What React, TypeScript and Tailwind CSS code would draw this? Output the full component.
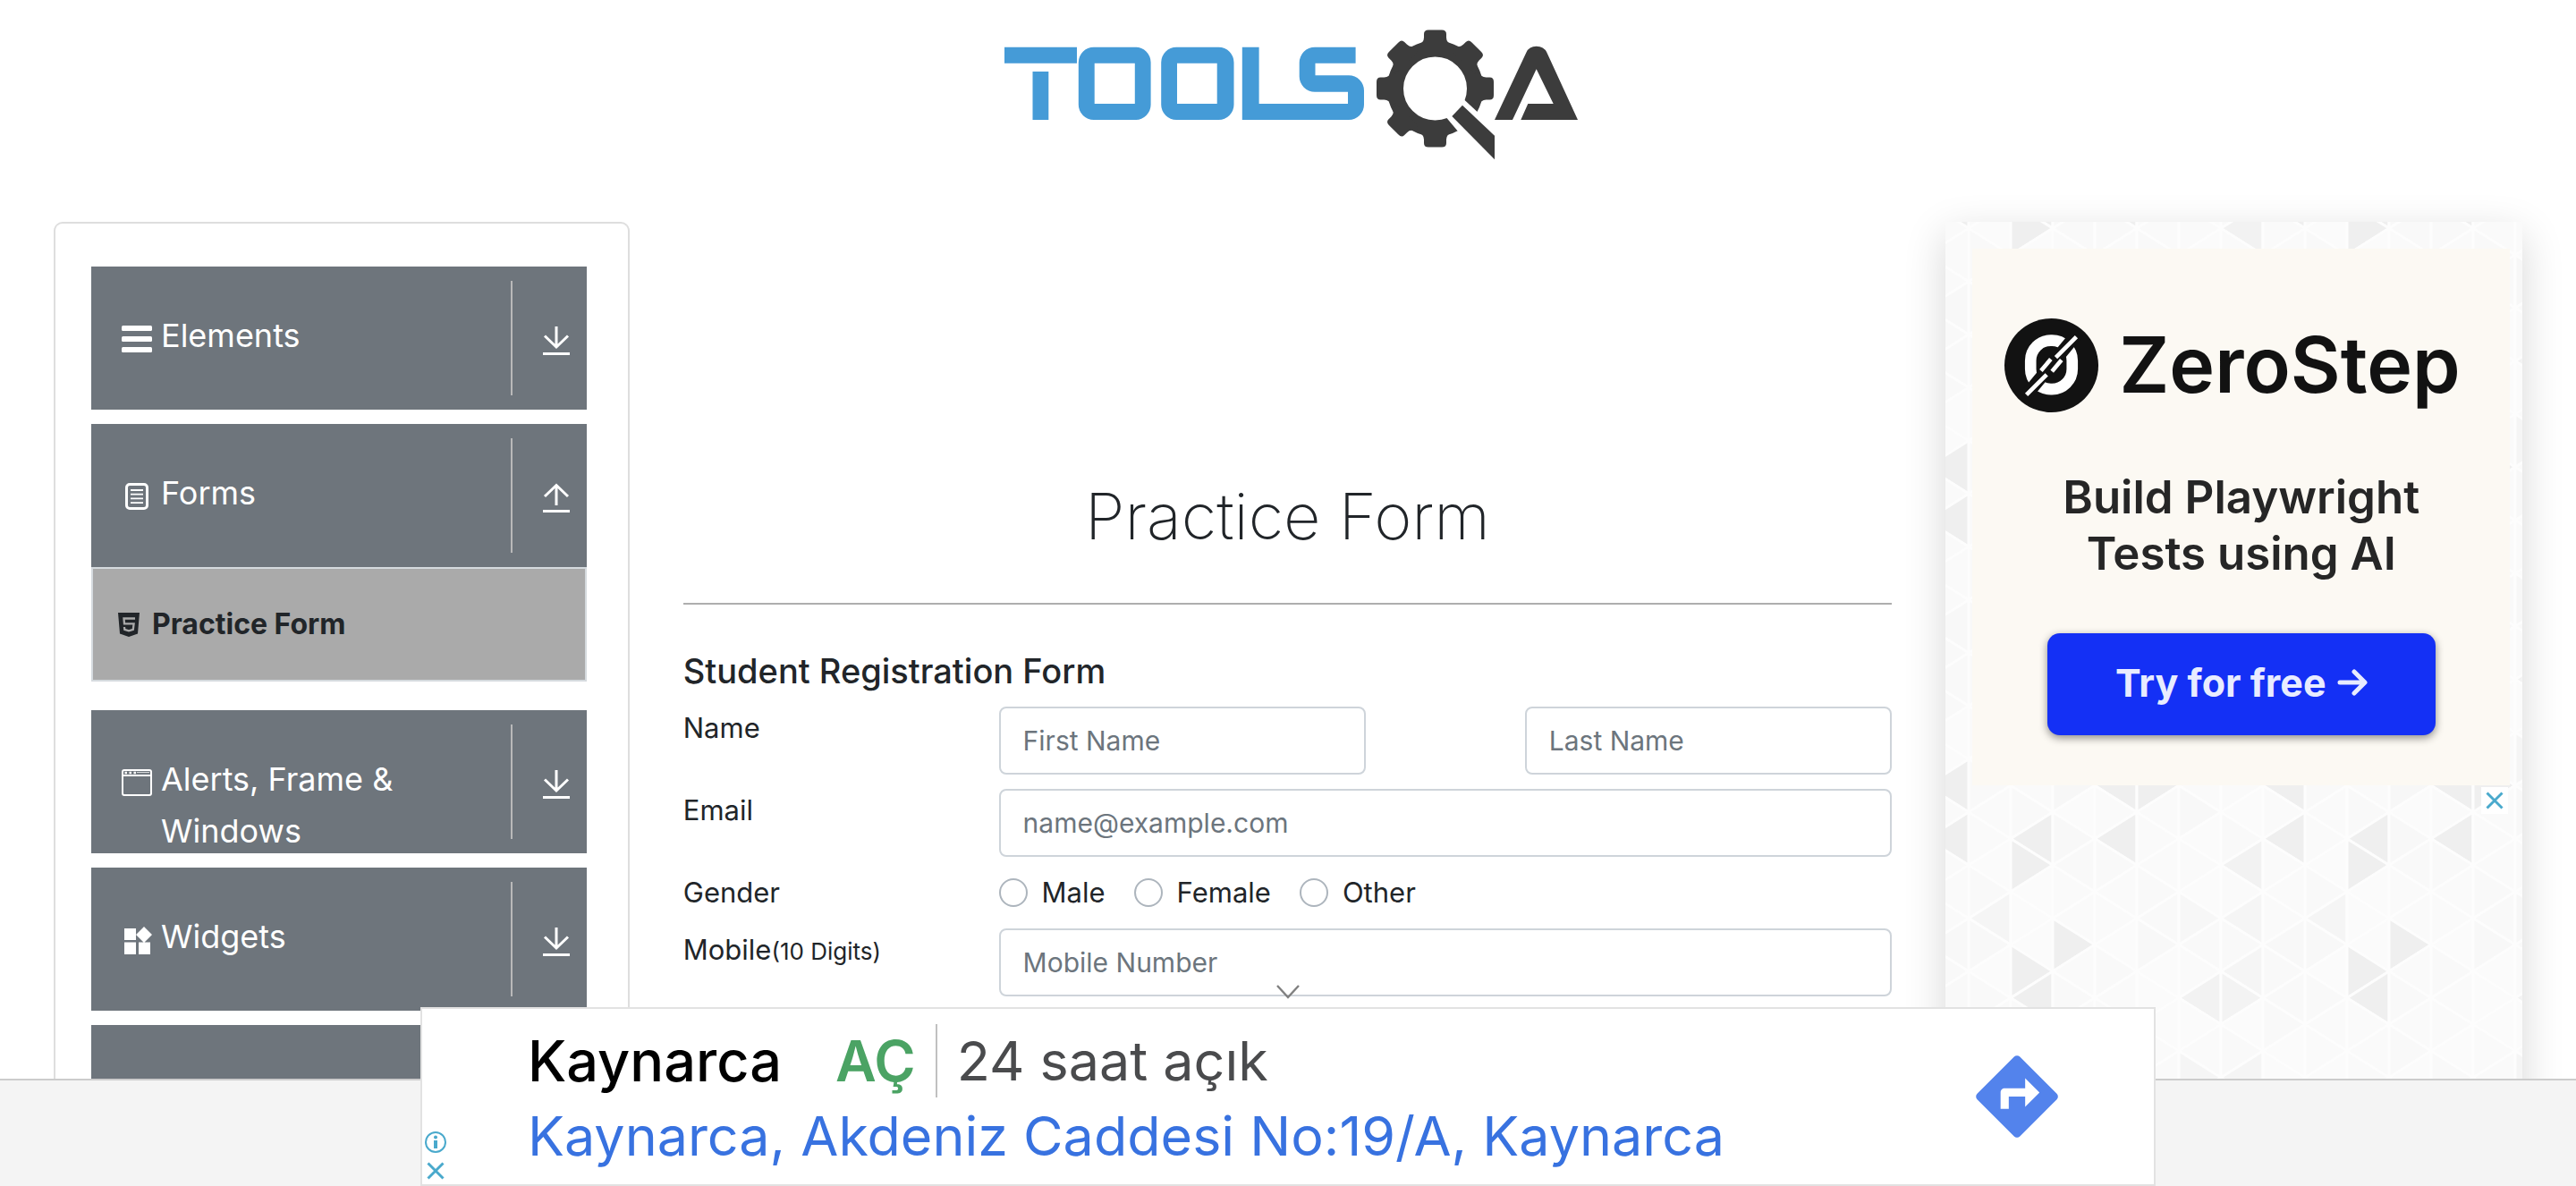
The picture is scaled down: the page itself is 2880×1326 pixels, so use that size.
import React from "react";

const UI = "font-['Inter','Liberation_Sans',sans-serif]";

const COL = 47;
const HALF = 356 / 12;
const DARK = "#efefef";
const MID = "#f5f5f5";
const SHADES: Record<string, string> = {
  "7,11": DARK, "7,1": DARK, "1,1": DARK, "1,2": DARK, "1,6": DARK, "1,7": DARK,
  "2,5": DARK, "3,1": DARK, "3,11": DARK, "4,11": DARK, "5,7": "#f2f2f2",
  "6,2": "#f2f2f2", "6,7": "#f3f3f3", "0,4": MID, "6,4": MID, "6,6": MID,
  "5,10": MID, "6,10": MID, "5,4": "#f7f7f7", "2,11": "#f7f7f7", "4,5": "#f8f8f8",
  "0,5": "#f8f8f8", "2,1": "#f8f8f8", "7,5": "#f8f8f8", "5,0": "#f8f8f8",
};
const LIGHTS = ["#fafafa", "#f9f9f9", "#fbfbfb", "#fafafa"];

function TrianglePattern() {
  const cells: React.ReactNode[] = [];
  for (let i = 0; i < 8; i++) {
    for (let h = 0; h <= 12; h++) {
      const left = (i + h) % 2 === 0;
      const x1 = i * COL;
      const x2 = x1 + COL;
      const y = h * HALF;
      const pts = left
        ? `${x1},${y} ${x2},${y - HALF} ${x2},${y + HALF}`
        : `${x2},${y} ${x1},${y - HALF} ${x1},${y + HALF}`;
      const hh = h % 12;
      const fill = SHADES[`${i},${hh}`] ?? LIGHTS[(i * 5 + hh * 3 + ((i * hh) % 3)) % 4];
      cells.push(<polygon key={`${i}-${h}`} points={pts} fill={fill} stroke="#fdfdfd" strokeWidth="3" />);
    }
  }
  return (
    <svg className="absolute inset-0 h-full w-full" aria-hidden="true">
      <defs>
        <pattern id="triangles" x="26" y="304" width="376" height="356" patternUnits="userSpaceOnUse">
          {cells}
        </pattern>
      </defs>
      <rect width="100%" height="100%" fill="url(#triangles)" />
    </svg>
  );
}

function Logo() {
  return (
    <svg viewBox="1120 20 650 170" className="h-[170px] w-[650px]" role="img" aria-label="TOOLSQA">
      <g fill="#459bd7" fillRule="evenodd">
        <path d="M1123 52.7H1204V70.7H1123ZM1154.5 80H1172.3V134H1154.5Z" />
        <path d="M1222.8 52.7H1269.6A17 17 0 0 1 1286.6 69.7V117A17 17 0 0 1 1269.6 134H1222.8A17 17 0 0 1 1205.8 117V69.7A17 17 0 0 1 1222.8 52.7ZM1223.7 70.7V116H1268.8V70.7Z" />
        <path d="M1315.2 52.7H1362.5A17 17 0 0 1 1379.5 69.7V117A17 17 0 0 1 1362.5 134H1315.2A17 17 0 0 1 1298.2 117V69.7A17 17 0 0 1 1315.2 52.7ZM1316 70.7V116H1360.7V70.7Z" />
        <path d="M1388.8 52.7H1407.6V116H1507V102.7H1470A17.3 17.3 0 0 1 1452.7 85.4V70A17.3 17.3 0 0 1 1470 52.7H1515.6V70.7H1470.5V84.3H1508A17 17 0 0 1 1525 101.3V117A17 17 0 0 1 1508 134H1388.8Z" />
      </g>
      <g fill="#3c3c3c">
        <circle cx="1604.5" cy="99" r="44.5" fill="none" stroke="#3c3c3c" strokeWidth="18" />
        {[0, 45, 90, 180, 225, 270, 315].map((a) => (
          <path
            key={a}
            transform={`rotate(${a} 1604.5 99)`}
            d="M1585 50Q1592 48 1592 42V38Q1592 33.5 1597 33.5H1612Q1617 33.5 1617 38V42Q1617 48 1624 50L1620 56H1589Z"
          />
        ))}
        <polygon fill="#fff" points="1637.3,111.7 1652.7,126 1673,145.3 1673,186.7 1629.3,146 1617.3,131.7" />
        <polygon points="1635,117.7 1671,151.7 1671,178.3 1623.3,130" />
        <path d="M1671 134L1706.5 58.5Q1709.5 51.7 1717.7 51.7Q1726 51.7 1729.3 58.5L1764 134H1700.3L1708.3 116H1736.7L1717.7 77.3L1691 134Z" />
      </g>
    </svg>
  );
}

function ListIcon() {
  return (
    <svg viewBox="0 0 34 34" className="h-[34px] w-[34px]" fill="currentColor">
      <rect y="2" width="34" height="6" rx="1.5" />
      <rect y="14" width="34" height="6" rx="1.5" />
      <rect y="26" width="34" height="6" rx="1.5" />
    </svg>
  );
}

function FormsIcon() {
  return (
    <svg viewBox="0 0 34 34" className="h-[34px] w-[34px]" fill="none" stroke="currentColor">
      <rect x="5.5" y="3.5" width="23" height="27" rx="3.5" strokeWidth="3" />
      <path d="M10 10H24M10 14.7H24M10 19.4H24M10 24.1H24" strokeWidth="1.8" />
    </svg>
  );
}

function WindowIcon() {
  return (
    <svg viewBox="0 0 34 34" className="h-[34px] w-[34px]" fill="none" stroke="currentColor" strokeWidth="2">
      <rect x="1" y="3" width="32" height="28" rx="2" />
      <path d="M1 9H33" />
      <path d="M3.5 6H6M8.5 6H11M13.5 6H16" strokeWidth="2.4" />
      <path d="M17 5.6H31" strokeWidth="0.8" />
    </svg>
  );
}

function WidgetsIcon() {
  return (
    <svg viewBox="0 0 34 34" className="h-[34px] w-[34px]" fill="currentColor">
      <path d="M3 4H16V17H3ZM3 19.5H16V33H3ZM19 19.5H32V33H19ZM25 2L34 11L25 20L16 11Z" />
    </svg>
  );
}

function ArrowIcon({ up = false }: { up?: boolean }) {
  return (
    <svg viewBox="0 0 32 34" className="h-[34px] w-8" fill="none" stroke="currentColor" strokeWidth="3">
      <path d={up ? "M16 25V3M3 15L16 2.5L29 15M1 31.5H31" : "M16 1V23M3 11.5L16 24L29 11.5M1 31.5H31"} />
    </svg>
  );
}

function Html5Icon() {
  return (
    <svg viewBox="0 0 24 27" className="h-[27px] w-6">
      <path fill="#212529" d="M0 0H24L22 23.5L12 27L2 23.5Z" />
      <path fill="none" stroke="#aaaaaa" strokeWidth="2.3" d="M19 6.5H6.5L7 12.3H17.6L16.8 18.8L12 20.4L7.3 18.8L7 16" />
    </svg>
  );
}

function CloseIcon() {
  return (
    <svg viewBox="0 0 20 20" className="h-5 w-5" fill="none" stroke="#49a9cc" strokeWidth="3">
      <path d="M1.5 1.5L18.5 18.5M18.5 1.5L1.5 18.5" />
    </svg>
  );
}

function ZeroStepMark() {
  return (
    <svg viewBox="28 30 320 322" className="h-[107px] w-[107px] shrink-0" fill="none">
      <circle cx="188" cy="191" r="158" fill="#121212" />
      <rect x="118" y="107" width="140" height="164" rx="68" stroke="#fff" strokeWidth="38" />
      <path d="M278 80L98 298" stroke="#121212" strokeWidth="42" />
      <path d="M272 95L203 164M104 290L172 222M153 209L186 170M190 211L222 173" stroke="#fff" strokeWidth="14" />
    </svg>
  );
}

function NavItem({ icon, label, up }: { icon?: React.ReactNode; label: string; up?: boolean }) {
  return (
    <button type="button" className="flex h-40 w-full items-start overflow-hidden bg-[#6e757c] py-4 pr-[18px] pl-[34px] text-left text-white">
      <span className="mt-12 h-[34px] w-11 shrink-0">{icon}</span>
      <span className="mt-8 max-w-[300px] flex-1 text-[36px] leading-[58px]">{label}</span>
      <span className="ml-auto h-32 w-0.5 shrink-0 bg-[#b9b9b9]" />
      <span className="mt-[50px] ml-[33px] h-[34px] w-8 shrink-0">
        <ArrowIcon up={up} />
      </span>
    </button>
  );
}

const label = "col-span-3 text-[31px] leading-[48px]";
const field =
  "h-[76px] w-full min-w-0 rounded-lg border-2 border-[#ced4da] bg-white px-[25px] text-[30px] placeholder:text-[#6c757d]";

export default function App() {
  return (
    <div className={`relative flex h-screen flex-col overflow-hidden bg-white text-[#212529] ${UI}`}>
      <header className="flex h-[200px] shrink-0 justify-center pt-5">
        <a href="#home" className="ml-2.5">
          <Logo />
        </a>
      </header>

      <div className="grid min-h-0 flex-1 grid-cols-[644fr_1352fr_645fr] gap-[60px] overflow-hidden px-[60px] pt-12">
        <aside className="rounded-t-[10px] border-2 border-b-0 border-[#dedede] px-[46px] pt-12 pl-10">
          <nav className="flex flex-col gap-4">
            <NavItem icon={<ListIcon />} label="Elements" />
            <div className="mb-4">
              <NavItem icon={<FormsIcon />} label="Forms" up />
              <a href="#practice-form" className="flex h-32 items-center border-2 border-[#d5dade] bg-[#aaaaaa] px-7 text-[32px] font-bold">
                <Html5Icon />
                <span className="ml-3.5">Practice Form</span>
              </a>
            </div>
            <NavItem icon={<WindowIcon />} label="Alerts, Frame & Windows" />
            <NavItem icon={<WidgetsIcon />} label="Widgets" />
            <NavItem label="" />
          </nav>
        </aside>

        <main className="min-w-0">
          <div className="h-[281px]" />
          <h1 className="text-center text-[72px] leading-[96px] font-extralight">Practice Form</h1>
          <hr className="mt-[49px] border-t-2 border-[#aeaeae]" />
          <form className="mt-[50px]">
            <h2 className="mb-4 text-[38px] leading-[48px] font-medium">Student Registration Form</h2>
            <div className="grid grid-cols-12 gap-x-[60px] gap-y-4">
              <label htmlFor="first" className={label}>Name</label>
              <div className="col-span-4">
                <input id="first" placeholder="First Name" className={field} />
              </div>
              <div className="col-span-4 col-start-9">
                <input aria-label="Last Name" placeholder="Last Name" className={field} />
              </div>
              <label htmlFor="email" className={label}>Email</label>
              <div className="col-span-9">
                <input id="email" type="email" placeholder="name@example.com" className={field} />
              </div>
              <span id="gender" className={label}>Gender</span>
              <div role="radiogroup" aria-labelledby="gender" className="col-span-9 flex h-12 items-center gap-8">
                {["Male", "Female", "Other"].map((g) => (
                  <label key={g} className="flex items-center gap-4 text-[31px]">
                    <input type="radio" name="gender" className="h-8 w-8 appearance-none rounded-full border-2 border-[#adb5bd] bg-white" />
                    {g}
                  </label>
                ))}
              </div>
              <label htmlFor="mobile" className={`${label} whitespace-nowrap`}>
                Mobile<small className="text-[26px]">(10 Digits)</small>
              </label>
              <div className="col-span-9">
                <input id="mobile" type="tel" placeholder="Mobile Number" className={field} />
              </div>
            </div>
          </form>
        </main>

        <aside className="relative bg-[#fafafa] pt-[30px] pl-[30px] shadow-[0_14px_44px_rgba(0,0,0,0.16)]">
          <TrianglePattern />
          <div className="relative w-[601px]">
            <div className="flex h-[600px] flex-col items-center bg-[#fcf9f3]">
              <div className="mt-[77px] flex w-full items-center gap-[22px] pl-[35px]">
                <ZeroStepMark />
                <span className="text-[86px] leading-[107px] font-semibold text-[#121212]">ZeroStep</span>
              </div>
              <p className="mt-[62px] text-center text-[51px] leading-[63px] font-semibold text-[#262626]">
                Build Playwright
                <br />
                Tests using AI
              </p>
              <button
                type="button"
                className="mt-[58px] flex h-[114px] w-[434px] items-center justify-center gap-3 rounded-[14px] bg-[#1430f5] pb-1 text-[43px] font-bold text-[#e8ecff] shadow-[0_3px_10px_rgba(0,0,0,0.45)]"
              >
                Try for free
                <svg viewBox="0 0 34 34" className="h-[34px] w-[34px]" fill="none" stroke="currentColor" strokeWidth="5" strokeLinecap="round" strokeLinejoin="round">
                  <path d="M3 17H30M19 5L31 17L19 29" />
                </svg>
              </button>
            </div>
            <button type="button" aria-label="Close ad" className="absolute top-[602px] right-0.5 flex h-[30px] w-[30px] items-center justify-center bg-white">
              <CloseIcon />
            </button>
          </div>
        </aside>
      </div>

      <footer className="h-[120px] shrink-0 border-t-2 border-[#cccccc] bg-[#f4f4f4]" />

      <section aria-label="Advertisement" className="absolute inset-x-0 bottom-0 mx-auto flex h-[200px] w-full max-w-[1940px] items-center border-2 border-[#e2e2e2] bg-white">
        <button type="button" aria-label="Collapse ad" className="absolute -top-7 left-1/2 -ml-[13px] h-[18px] w-[26px]">
          <svg viewBox="0 0 26 18" className="h-[18px] w-[26px]" fill="none" stroke="#808080" strokeWidth="2.4">
            <path d="M1 2L13 15L25 2" />
          </svg>
        </button>
        <div className="flex w-[30px] flex-col items-center gap-2.5 self-end pb-[5px]">
          <svg viewBox="0 0 24 24" className="h-6 w-6" fill="none" stroke="#49a9cc">
            <circle cx="12" cy="12" r="11" strokeWidth="2" />
            <path d="M12 10V19" strokeWidth="4" />
            <circle cx="12" cy="6.5" r="2" fill="#49a9cc" stroke="none" />
          </svg>
          <CloseIcon />
        </div>
        <div className="ml-[88px] flex-1 pt-1 whitespace-nowrap">
          <div className="flex items-center text-[61px] leading-[84px]">
            <strong className="text-[63px] font-medium text-black">Kaynarca</strong>
            <span className="ml-[60px] text-[63px] font-semibold text-[#4ba364]">AÇ</span>
            <span className="ml-[22px] h-[82px] w-0.5 bg-[#c0c0c0]" />
            <span className="ml-[22px] text-[#4a4b4d]">24 saat açık</span>
          </div>
          <a href="#directions" className="block text-[61px] leading-[84px] text-[#3872e0]">
            Kaynarca, Akdeniz Caddesi No:19/A, Kaynarca
          </a>
        </div>
        <a href="#directions" aria-label="Directions" className="mr-[98px]">
          <svg viewBox="0 0 24 24" className="h-[110px] w-[110px]" fill="#5383ec">
            <path d="M21.71 11.29l-9-9a.996.996 0 0 0-1.41 0l-9 9a.996.996 0 0 0 0 1.41l9 9c.39.39 1.02.39 1.41 0l9-9a.996.996 0 0 0 0-1.41zM14 14.5V12h-4v3H8v-4c0-.55.45-1 1-1h5V7.5l3.5 3.5-3.5 3.5z" />
          </svg>
        </a>
      </section>
    </div>
  );
}
